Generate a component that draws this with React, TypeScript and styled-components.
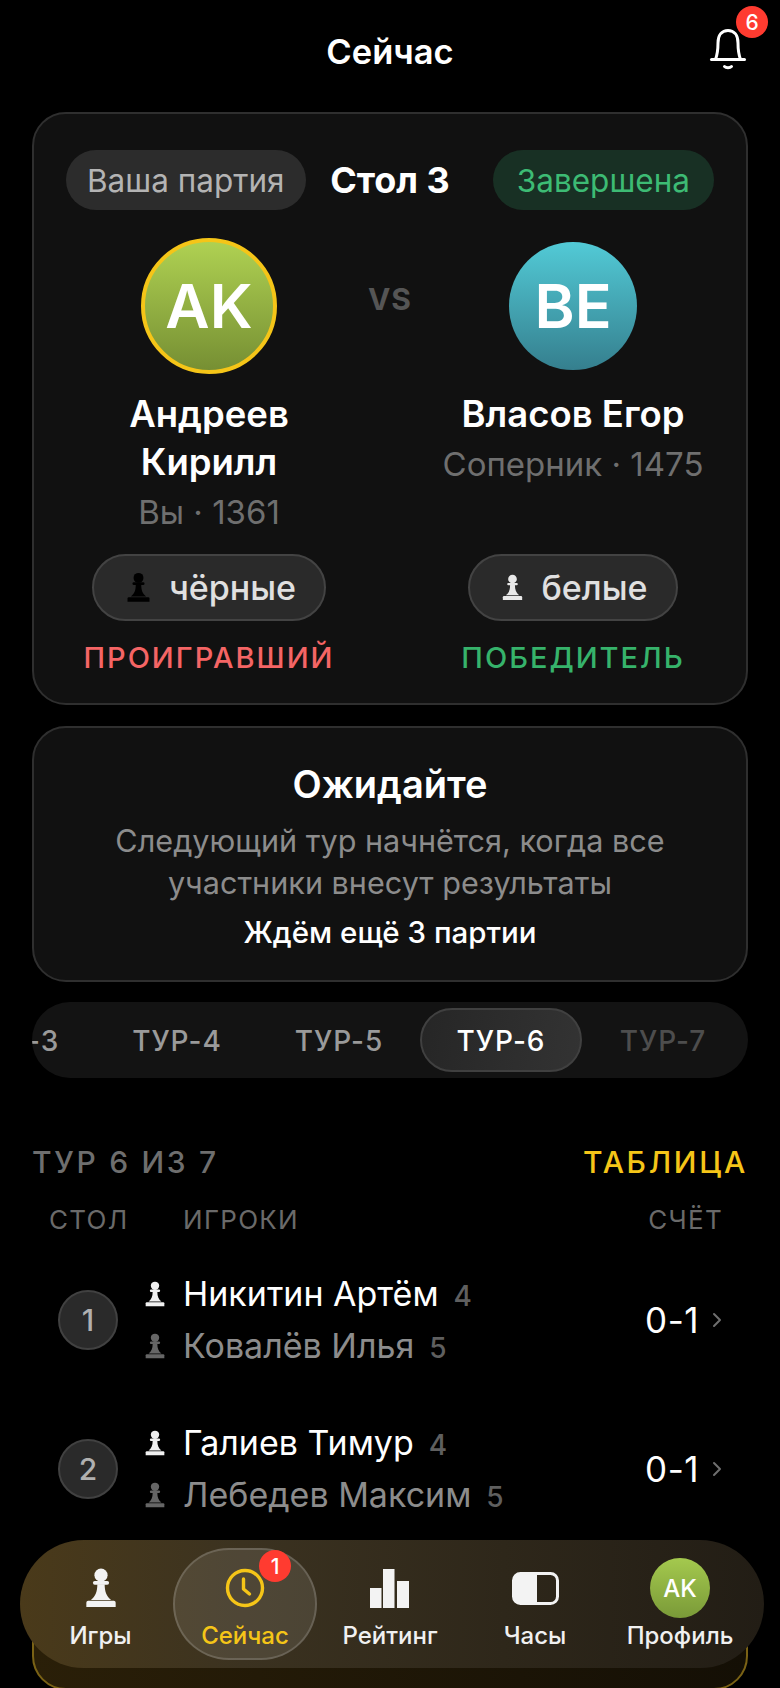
import React from "react";
import styled, { createGlobalStyle } from "styled-components";

const GlobalStyle = createGlobalStyle`
  html, body {
    margin: 0;
    padding: 0;
    background: #000;
    height: 100%;
    overflow: hidden;
  }
  * {
    box-sizing: border-box;
  }
`;

const Screen = styled.div`
  position: relative;
  width: 780px;
  height: 1688px;
  overflow: hidden;
  background: #000;
  color: #fff;
  font-family: Inter, "Noto Sans", sans-serif;
`;

const Header = styled.header`
  position: relative;
  height: 112px;
  display: flex;
  justify-content: center;
  padding-top: 29px;
`;

const Title = styled.h1`
  margin: 0;
  font-size: 34.5px;
  line-height: 46px;
  height: 46px;
  font-weight: 600;
`;

const BellWrap = styled.div`
  position: absolute;
  left: 708px;
  top: 27px;
  width: 40px;
  height: 44px;
`;

const Badge = styled.span<{ $size: number; $font: number }>`
  position: absolute;
  width: ${(p) => p.$size}px;
  height: ${(p) => p.$size}px;
  border-radius: 50%;
  background: #ff3b30;
  color: #fff;
  font-size: ${(p) => p.$font}px;
  font-weight: 500;
  display: flex;
  align-items: center;
  justify-content: center;
`;

const BellBadge = styled(Badge)`
  left: 28px;
  top: -21px;
`;

const Content = styled.main`
  padding: 0 32px;
  display: flex;
  flex-direction: column;
`;

const Card = styled.section`
  background: #111;
  border: 2px solid #2f2f2f;
  border-radius: 34px;
`;

const MatchCard = styled(Card)`
  height: 593px;
  padding: 36px 32px 0;
`;

const MatchTop = styled.div`
  display: grid;
  grid-template-columns: 1fr auto 1fr;
  align-items: center;
`;

const Pill = styled.span<{ $tone: "grey" | "green" }>`
  height: 60px;
  border-radius: 30px;
  display: flex;
  align-items: center;
  font-size: 31.5px;
  padding: 0 ${(p) => (p.$tone === "green" ? "24px" : "21px")};
  justify-self: ${(p) => (p.$tone === "green" ? "end" : "start")};
  background: ${(p) => (p.$tone === "green" ? "#183024" : "#2c2c2c")};
  color: ${(p) => (p.$tone === "green" ? "#3dbb74" : "#b4b4b4")};
`;

const TableName = styled.span`
  font-size: 36px;
  font-weight: 700;
`;

const Versus = styled.div`
  display: grid;
  grid-template-columns: 286px 286px;
  column-gap: 78px;
  row-gap: 18px;
  margin-top: 28px;
  position: relative;
`;

const VsLabel = styled.span`
  position: absolute;
  left: 50%;
  transform: translateX(-50%);
  top: 43px;
  font-size: 30px;
  font-weight: 700;
  letter-spacing: 1px;
  color: #555;
`;

const Player = styled.div`
  display: flex;
  flex-direction: column;
  align-items: center;
  text-align: center;
`;

const Avatar = styled.div<{ $variant: "green" | "teal" }>`
  border-radius: 50%;
  display: flex;
  align-items: center;
  justify-content: center;
  color: #fff;
  font-weight: 600;
  font-size: 61px;
  ${(p) =>
    p.$variant === "green"
      ? `width: 136px; height: 136px; margin-bottom: -1px; border: 4px solid #f5c518; background: linear-gradient(180deg, #afd152, #768f33);`
      : `width: 128px; height: 128px; margin: 4px 0 3px; background: linear-gradient(180deg, #52cad6, #357f8e);`}
`;

const PlayerName = styled.div`
  font-size: 36.5px;
  line-height: 48px;
  font-weight: 600;
  margin-top: 17px;
  width: 270px;
`;

const PlayerMeta = styled.div`
  margin-top: 2px;
  font-size: 33px;
  line-height: 48px;
  color: #6f6f6f;
`;

const SidePill = styled.div`
  height: 67px;
  border-radius: 34px;
  background: #2a2a2a;
  border: 2px solid #434343;
  padding: 0 28px;
  display: flex;
  align-items: center;
  gap: 14px;
  font-size: 34px;
  font-weight: 500;
  color: #e0e0e0;
`;

const Outcome = styled.div<{ $win: boolean }>`
  margin-top: 18px;
  font-size: 29px;
  line-height: 38px;
  font-weight: 500;
  letter-spacing: 2px;
  color: ${(p) => (p.$win ? "#36b36b" : "#f56565")};
`;

const WaitCard = styled(Card)`
  margin-top: 21px;
  height: 256px;
  padding-top: 32px;
  text-align: center;
`;

const WaitTitle = styled.div`
  font-size: 38px;
  line-height: 48px;
  font-weight: 600;
`;

const WaitText = styled.div`
  margin-top: 12px;
  font-size: 30.6px;
  line-height: 42px;
  color: #8c8c8c;
`;

const WaitNote = styled.div`
  margin-top: 8px;
  font-size: 29.5px;
  line-height: 40px;
  font-weight: 500;
`;

const Tabs = styled.nav`
  margin-top: 20px;
  height: 76px;
  border-radius: 38px;
  background: #131313;
  display: flex;
  justify-content: flex-end;
  align-items: center;
  padding-right: 4px;
  overflow: hidden;
`;

const Tab = styled.div<{ $active?: boolean; $future?: boolean }>`
  flex: 0 0 162px;
  height: 64px;
  padding-top: 2px;
  border-radius: 32px;
  display: flex;
  align-items: center;
  justify-content: center;
  font-size: 28px;
  font-weight: 500;
  letter-spacing: 1px;
  color: ${(p) => (p.$active ? "#fff" : p.$future ? "#4d4d4d" : "#9a9a9a")};
  ${(p) => p.$active && `background: linear-gradient(100deg, #262626, #333); border: 2px solid #404040;`}
`;

const SectionHead = styled.div`
  margin-top: 60px;
  display: flex;
  justify-content: space-between;
  align-items: center;
  font-size: 30px;
  line-height: 48px;
  font-weight: 500;
  letter-spacing: 2.7px;
`;

const SectionTitle = styled.span`
  color: #6e6e6e;
`;

const SectionLink = styled.span`
  color: #f5c518;
`;

const ColumnHead = styled.div`
  margin-top: 16px;
  display: flex;
  padding: 0 25px 0 17px;
  font-size: 26px;
  line-height: 36px;
  letter-spacing: 1.3px;
  color: #6a6a6a;
`;

const ColTable = styled.span`
  width: 134px;
`;

const ColPlayers = styled.span`
  flex: 1;
`;

const PairingList = styled.div`
  margin-top: 7px;
`;

const Pairing = styled.div`
  height: 149px;
  padding: 0 26px;
  display: flex;
  align-items: center;
`;

const TableNo = styled.div`
  width: 60px;
  height: 60px;
  flex: none;
  border-radius: 50%;
  background: #2a2a2a;
  border: 2px solid #414141;
  color: #b0b0b0;
  font-size: 30px;
  font-weight: 500;
  display: flex;
  align-items: center;
  justify-content: center;
`;

const Names = styled.div`
  flex: 1;
  margin-left: 23px;
  display: flex;
  flex-direction: column;
`;

const NameLine = styled.div<{ $won?: boolean }>`
  height: 52px;
  display: flex;
  align-items: center;
  font-size: 34px;
  color: ${(p) => (p.$won ? "#fff" : "#8c8c8c")};
`;

const PawnSlot = styled.span`
  width: 42px;
  flex: none;
  display: flex;
`;

const Points = styled.span`
  margin-left: 15px;
  margin-top: 4px;
  font-size: 28px;
  font-weight: 500;
  color: #5f5f5f;
`;

const Score = styled.div`
  font-size: 35px;
  font-weight: 400;
  letter-spacing: 0.5px;
  color: #fff;
`;

const Chevron = styled.svg`
  margin-left: 13px;
  flex: none;
`;

const LowerCard = styled.section`
  margin-top: 17px;
  height: 130px;
  flex: none;
  border: 2px solid #7a6215;
  border-radius: 34px;
  background: linear-gradient(90deg, #2a1f08, #140f05);
`;

const TabBar = styled.nav`
  position: absolute;
  left: 20px;
  top: 1540px;
  width: 744px;
  height: 128px;
  padding-left: 8px;
  border-radius: 64px;
  background: linear-gradient(90deg, #4a3a1a 0%, #3b3220 30%, #2e271a 65%, #221d15 100%);
  display: grid;
  grid-template-columns: 145px 144px 146px 144px 146px;
`;

const BarItem = styled.div<{ $active?: boolean }>`
  position: relative;
  display: flex;
  flex-direction: column;
  align-items: center;
  height: 112px;
  margin-top: 8px;
  border-radius: 56px;
  border: 2px solid ${(p) => (p.$active ? "rgba(255,255,255,0.16)" : "transparent")};
  color: ${(p) => (p.$active ? "#f5c518" : "#f0f0f0")};
  background: ${(p) => (p.$active ? "rgba(255,255,255,0.1)" : "transparent")};
`;

const BarIcon = styled.div`
  margin-top: 8px;
  height: 60px;
  display: flex;
  align-items: center;
  justify-content: center;
`;

const BarLabel = styled.span`
  margin-top: 4px;
  font-size: 24px;
  line-height: 28px;
  font-weight: 500;
  white-space: nowrap;
`;

const ClockBadge = styled(Badge)`
  left: 84px;
  top: 0;
`;

const MiniAvatar = styled.div`
  width: 60px;
  height: 60px;
  border-radius: 50%;
  background: linear-gradient(180deg, #a4c94e, #7a9a38);
  color: #fff;
  font-size: 24px;
  font-weight: 500;
  display: flex;
  align-items: center;
  justify-content: center;
`;

function Pawn({ size, color }: { size: number; color: string }) {
  return (
    <svg width={size} height={size} viewBox="0 0 24 24" fill={color}>
      <circle cx="12" cy="5" r="3.6" />
      <rect x="7.6" y="8.2" width="8.8" height="2" rx="1" />
      <path d="M10 10h4c0 4 1 6.500 3.500 8.500H6.500C9 16.500 10 14 10 10z" />
      <path d="M5 19h14a1 1 0 0 1 1 1v2.400H4V20a1 1 0 0 1 1-1z" />
    </svg>
  );
}

function Bell() {
  return (
    <svg width="40" height="44" viewBox="0 0 40 44" fill="none" stroke="#fff" strokeWidth="3" strokeLinecap="round" strokeLinejoin="round">
      <path d="M3.500 32.500h33" />
      <path d="M7.500 32.500C9.500 27 10 22 10 16c0-8 4-12.500 10-12.500S30 8 30 16c0 6 .5 11 2.500 16.500" />
      <path d="M16.500 39.500c1.500 1.500 5.500 1.500 7 0" />
    </svg>
  );
}

function ClockIcon() {
  return (
    <svg width="40" height="40" viewBox="0 0 40 40" fill="none" stroke="#f5c518" strokeWidth="3.400" strokeLinecap="round" strokeLinejoin="round">
      <circle cx="20" cy="20" r="17.500" />
      <path d="M18.500 11v10l6 5" />
    </svg>
  );
}

function BarsIcon() {
  return (
    <svg width="40" height="40" viewBox="0 0 40 40" fill="#f3f3f3">
      <rect x="0" y="20" width="11.500" height="20" />
      <rect x="13" y="1" width="11.500" height="39" />
      <rect x="27" y="13" width="12" height="27" />
    </svg>
  );
}

function ClocksIcon() {
  return (
    <svg width="47" height="33" viewBox="0 0 47 33" fill="none">
      <rect x="1.500" y="1.500" width="44" height="30" rx="7" stroke="#f3f3f3" strokeWidth="3" />
      <path d="M8 1.500h17v30H8A6.500 6.500 0 0 1 1.500 25V8A6.500 6.500 0 0 1 8 1.500z" fill="#f3f3f3" />
    </svg>
  );
}

function RightChevron() {
  return (
    <Chevron width="10" height="18" viewBox="0 0 10 18" fill="none" stroke="#6e6e6e" strokeWidth="2" strokeLinecap="round" strokeLinejoin="round">
      <path d="M2 3l6 6-6 6" />
    </Chevron>
  );
}

const pairings = [
  { table: 1, white: "Никитин Артём", whitePts: 4, black: "Ковалёв Илья", blackPts: 5, score: "0-1" },
  { table: 2, white: "Галиев Тимур", whitePts: 4, black: "Лебедев Максим", blackPts: 5, score: "0-1" },
];

const rounds = ["ТУР-3", "ТУР-4", "ТУР-5", "ТУР-6", "ТУР-7"];

export default function App() {
  return (
    <Screen>
      <GlobalStyle />
      <Header>
        <Title>Сейчас</Title>
        <BellWrap>
          <Bell />
          <BellBadge $size={32} $font={21}>6</BellBadge>
        </BellWrap>
      </Header>
      <Content>
        <MatchCard>
          <MatchTop>
            <Pill $tone="grey">Ваша партия</Pill>
            <TableName>Стол 3</TableName>
            <Pill $tone="green">Завершена</Pill>
          </MatchTop>
          <Versus>
            <VsLabel>VS</VsLabel>
            <Player>
              <Avatar $variant="green">AK</Avatar>
              <PlayerName>Андреев Кирилл</PlayerName>
              <PlayerMeta>Вы · 1361</PlayerMeta>
            </Player>
            <Player>
              <Avatar $variant="teal">BE</Avatar>
              <PlayerName>Власов Егор</PlayerName>
              <PlayerMeta>Соперник · 1475</PlayerMeta>
            </Player>
            <Player>
              <SidePill>
                <Pawn size={33} color="#000" />
                чёрные
              </SidePill>
              <Outcome $win={false}>ПРОИГРАВШИЙ</Outcome>
            </Player>
            <Player>
              <SidePill>
                <Pawn size={29} color="#e8e8e8" />
                белые
              </SidePill>
              <Outcome $win>ПОБЕДИТЕЛЬ</Outcome>
            </Player>
          </Versus>
        </MatchCard>
        <WaitCard>
          <WaitTitle>Ожидайте</WaitTitle>
          <WaitText>
            Следующий тур начнётся, когда все
            <br />
            участники внесут результаты
          </WaitText>
          <WaitNote>Ждём ещё 3 партии</WaitNote>
        </WaitCard>
        <Tabs>
          {rounds.map((r, i) => (
            <Tab key={r} $active={i === 3} $future={i === 4}>
              {r}
            </Tab>
          ))}
        </Tabs>
        <SectionHead>
          <SectionTitle>ТУР 6 ИЗ 7</SectionTitle>
          <SectionLink>ТАБЛИЦА</SectionLink>
        </SectionHead>
        <ColumnHead>
          <ColTable>СТОЛ</ColTable>
          <ColPlayers>ИГРОКИ</ColPlayers>
          <span>СЧЁТ</span>
        </ColumnHead>
        <PairingList>
          {pairings.map((p) => (
            <Pairing key={p.table}>
              <TableNo>{p.table}</TableNo>
              <Names>
                <NameLine $won>
                  <PawnSlot><Pawn size={28} color="#f0f0f0" /></PawnSlot>
                  {p.white}
                  <Points>{p.whitePts}</Points>
                </NameLine>
                <NameLine>
                  <PawnSlot><Pawn size={28} color="#666" /></PawnSlot>
                  {p.black}
                  <Points>{p.blackPts}</Points>
                </NameLine>
              </Names>
              <Score>{p.score}</Score>
              <RightChevron />
            </Pairing>
          ))}
        </PairingList>
        <LowerCard />
      </Content>
      <TabBar>
        <BarItem>
          <BarIcon><Pawn size={44} color="#f3f3f3" /></BarIcon>
          <BarLabel>Игры</BarLabel>
        </BarItem>
        <BarItem $active>
          <BarIcon><ClockIcon /></BarIcon>
          <BarLabel>Сейчас</BarLabel>
          <ClockBadge $size={32} $font={21}>1</ClockBadge>
        </BarItem>
        <BarItem>
          <BarIcon><BarsIcon /></BarIcon>
          <BarLabel>Рейтинг</BarLabel>
        </BarItem>
        <BarItem>
          <BarIcon><ClocksIcon /></BarIcon>
          <BarLabel>Часы</BarLabel>
        </BarItem>
        <BarItem>
          <BarIcon><MiniAvatar>AK</MiniAvatar></BarIcon>
          <BarLabel>Профиль</BarLabel>
        </BarItem>
      </TabBar>
    </Screen>
  );
}
